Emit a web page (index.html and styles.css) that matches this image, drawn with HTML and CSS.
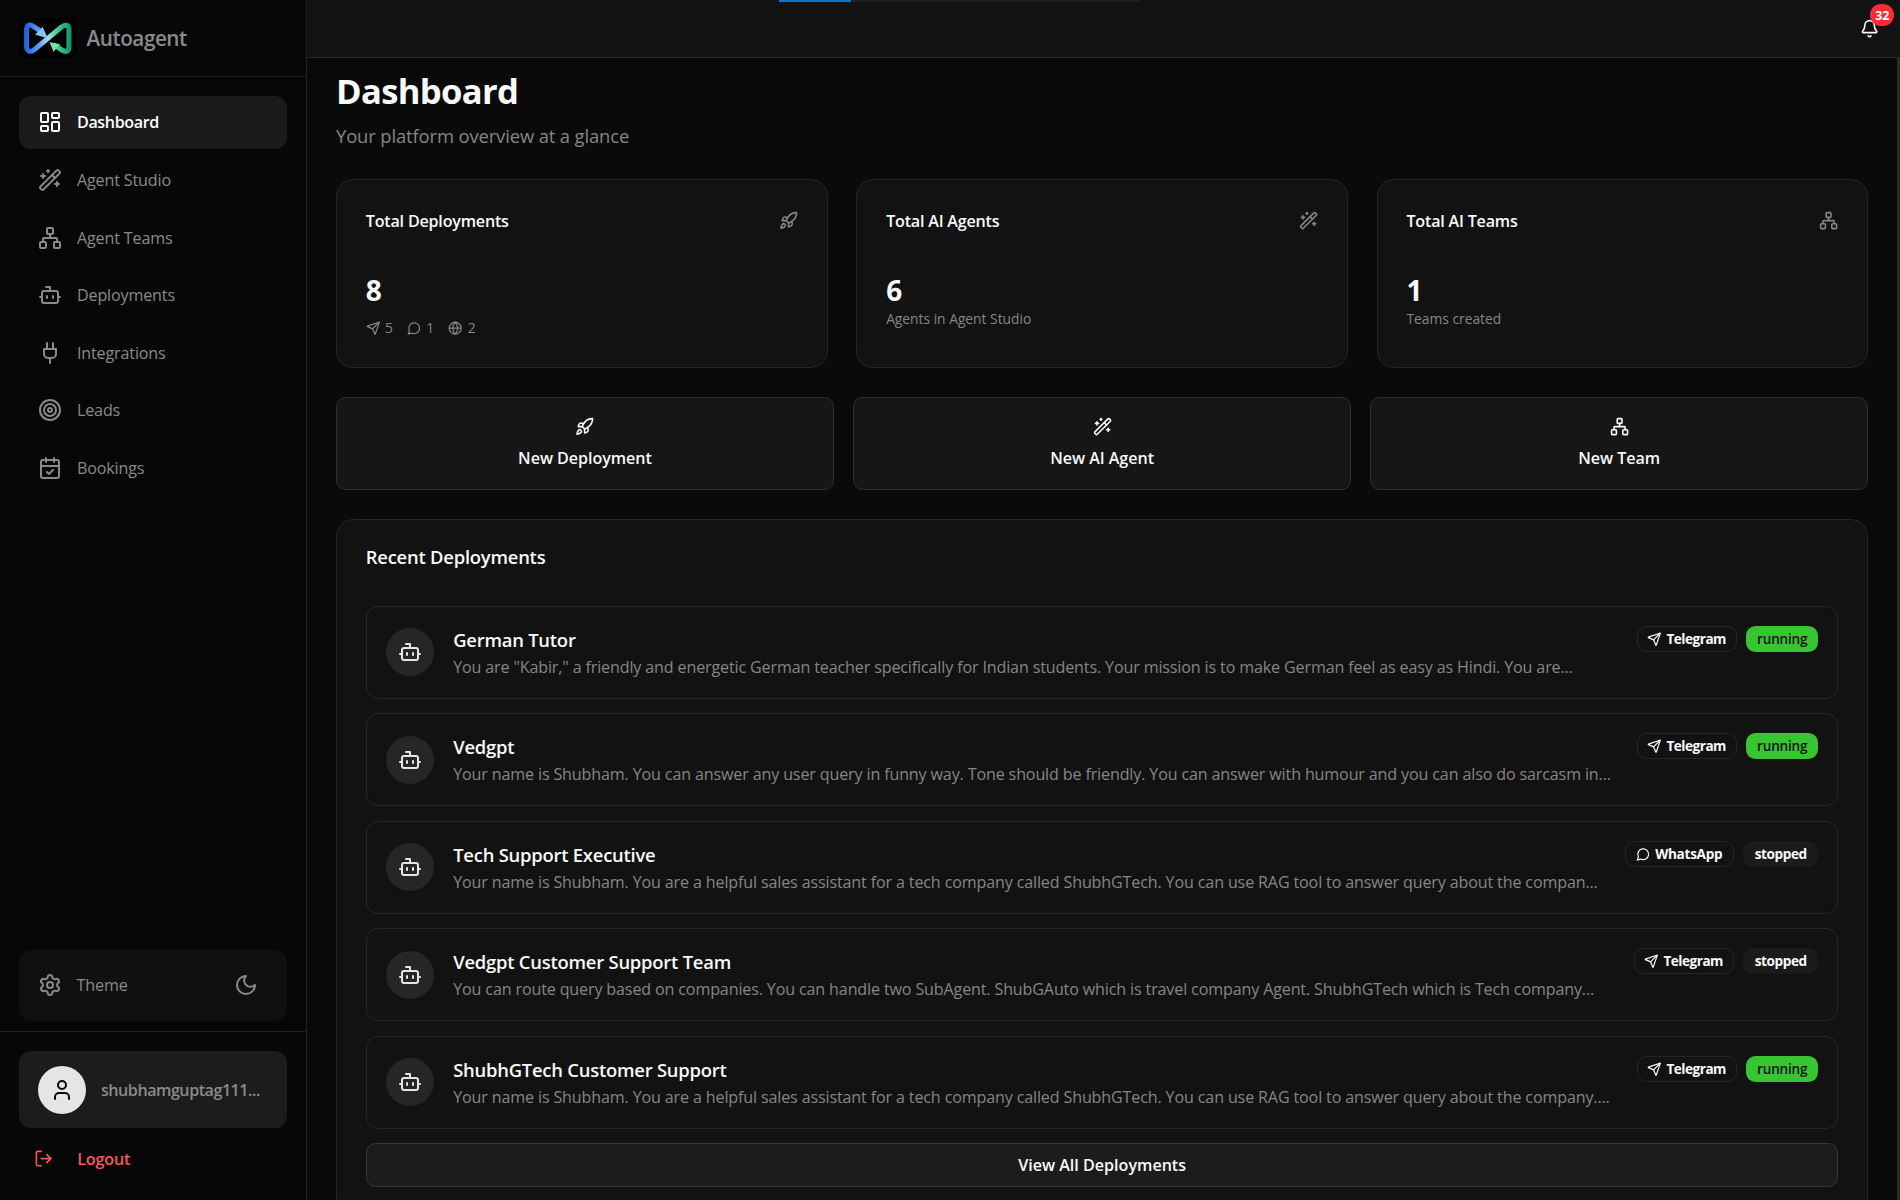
FILE: index.html
```html
<!DOCTYPE html>
<html lang="en">
<head>
    <meta charset="UTF-8">
    <meta name="viewport" content="width=device-width, initial-scale=1.0">
    <title>Autoagent - Dashboard</title>
    <link rel="stylesheet" href="styles.css">
</head>
<body>
    <!-- Icon sprite -->
    <svg class="sprite" width="0" height="0">
        <symbol id="i-dashboard" viewBox="0 0 24 24"><rect width="7" height="9" x="3" y="3" rx="1"/><rect width="7" height="5" x="14" y="3" rx="1"/><rect width="7" height="9" x="14" y="12" rx="1"/><rect width="7" height="5" x="3" y="16" rx="1"/></symbol>
        <symbol id="i-wand" viewBox="0 0 24 24"><path d="m21.64 3.64-1.28-1.28a1.21 1.21 0 0 0-1.72 0L2.36 18.64a1.21 1.21 0 0 0 0 1.72l1.28 1.28a1.2 1.2 0 0 0 1.72 0L21.64 5.36a1.2 1.2 0 0 0 0-1.72"/><path d="m14 7 3 3"/><path d="M5 6v4"/><path d="M19 14v4"/><path d="M10 2v2"/><path d="M7 8H3"/><path d="M21 16h-4"/><path d="M11 3H9"/></symbol>
        <symbol id="i-network" viewBox="0 0 24 24"><rect x="16" y="16" width="6" height="6" rx="1"/><rect x="2" y="16" width="6" height="6" rx="1"/><rect x="9" y="2" width="6" height="6" rx="1"/><path d="M5 16v-3a1 1 0 0 1 1-1h12a1 1 0 0 1 1 1v3"/><path d="M12 12V8"/></symbol>
        <symbol id="i-bot" viewBox="0 0 24 24"><path d="M12 8V4H8"/><rect width="16" height="12" x="4" y="8" rx="2"/><path d="M2 14h2"/><path d="M20 14h2"/><path d="M15 13v2"/><path d="M9 13v2"/></symbol>
        <symbol id="i-plug" viewBox="0 0 24 24"><path d="M12 22v-5"/><path d="M9 8V2"/><path d="M15 8V2"/><path d="M18 8v5a4 4 0 0 1-4 4h-4a4 4 0 0 1-4-4V8Z"/></symbol>
        <symbol id="i-target" viewBox="0 0 24 24"><circle cx="12" cy="12" r="10"/><circle cx="12" cy="12" r="6"/><circle cx="12" cy="12" r="2"/></symbol>
        <symbol id="i-calendar" viewBox="0 0 24 24"><path d="M8 2v4"/><path d="M16 2v4"/><rect width="18" height="18" x="3" y="4" rx="2"/><path d="M3 10h18"/><path d="m9 16 2 2 4-4"/></symbol>
        <symbol id="i-settings" viewBox="0 0 24 24"><path d="M9.671 4.136a2.34 2.34 0 0 1 4.659 0 2.34 2.34 0 0 0 3.319 1.915 2.34 2.34 0 0 1 2.33 4.033 2.34 2.34 0 0 0 0 3.831 2.34 2.34 0 0 1-2.33 4.033 2.34 2.34 0 0 0-3.319 1.915 2.34 2.34 0 0 1-4.659 0 2.34 2.34 0 0 0-3.32-1.915 2.34 2.34 0 0 1-2.33-4.033 2.34 2.34 0 0 0 0-3.831A2.34 2.34 0 0 1 6.35 6.051a2.34 2.34 0 0 0 3.319-1.915"/><circle cx="12" cy="12" r="3"/></symbol>
        <symbol id="i-moon" viewBox="0 0 24 24"><path d="M12 3a6 6 0 0 0 9 9 9 9 0 1 1-9-9Z"/></symbol>
        <symbol id="i-user" viewBox="0 0 24 24"><path d="M19 21v-2a4 4 0 0 0-4-4H9a4 4 0 0 0-4 4v2"/><circle cx="12" cy="7" r="4"/></symbol>
        <symbol id="i-logout" viewBox="0 0 24 24"><path d="m16 17 5-5-5-5"/><path d="M21 12H9"/><path d="M9 21H5a2 2 0 0 1-2-2V5a2 2 0 0 1 2-2h4"/></symbol>
        <symbol id="i-bell" viewBox="0 0 24 24"><path d="M10.268 21a2 2 0 0 0 3.464 0"/><path d="M3.262 15.326A1 1 0 0 0 4 17h16a1 1 0 0 0 .74-1.673C19.41 13.956 18 12.499 18 8A6 6 0 0 0 6 8c0 4.499-1.411 5.956-2.738 7.326"/></symbol>
        <symbol id="i-rocket" viewBox="0 0 24 24"><path d="M4.5 16.5c-1.5 1.26-2 5-2 5s3.74-.5 5-2c.71-.84.7-2.13-.09-2.91a2.18 2.18 0 0 0-2.91-.09z"/><path d="m12 15-3-3a22 22 0 0 1 2-3.95A12.88 12.88 0 0 1 22 2c0 2.72-.78 7.5-6 11a22.35 22.35 0 0 1-4 2z"/><path d="M9 12H4s.55-3.03 2-4c1.62-1.08 5 0 5 0"/><path d="M12 15v5s3.03-.55 4-2c1.08-1.62 0-5 0-5"/></symbol>
        <symbol id="i-send" viewBox="0 0 24 24"><path d="M14.536 21.686a.5.5 0 0 0 .937-.024l6.5-19a.496.496 0 0 0-.635-.635l-19 6.5a.5.5 0 0 0-.024.937l7.93 3.18a2 2 0 0 1 1.112 1.11z"/><path d="m21.854 2.147-10.94 10.939"/></symbol>
        <symbol id="i-chat" viewBox="0 0 24 24"><path d="M7.9 20A9 9 0 1 0 4 16.1L2 22Z"/></symbol>
        <symbol id="i-globe" viewBox="0 0 24 24"><circle cx="12" cy="12" r="10"/><path d="M12 2a14.5 14.5 0 0 0 0 20 14.5 14.5 0 0 0 0-20"/><path d="M2 12h20"/></symbol>
    </svg>

    <div class="app">
        <aside class="sidebar">
            <div class="brand">
                <svg class="logo" viewBox="0 0 58 40">
                    <defs>
                        <linearGradient id="logoGradient" gradientUnits="userSpaceOnUse" x1="6" y1="0" x2="52" y2="0">
                            <stop offset="0" stop-color="#1d5fdc"/>
                            <stop offset="0.3" stop-color="#5b9df0"/>
                            <stop offset="0.5" stop-color="#a5dcec"/>
                            <stop offset="0.7" stop-color="#45cc90"/>
                            <stop offset="1" stop-color="#109563"/>
                        </linearGradient>
                    </defs>
                    <rect width="58" height="40" rx="11" fill="#000"/>
                    <path class="logo-line" d="M22 13.500 15 8.800Q8.500 4.500 7.500 11V29Q8.500 36 15 31.800L42.500 9Q49.500 4.500 50 11V29Q49.500 36 43 32L36 27.500"/>
                    <path fill="#8cc2f5" d="M29 20.500 23.500 8.800 21 12 16 16.500Z"/>
                    <path fill="#6fe3a8" d="M30.500 24 41.500 26.500 38 29.500 34.500 34Z"/>
                </svg>
                <span class="brand-name">Autoagent</span>
            </div>

            <nav class="nav">
                <a class="nav-item active"><svg class="icon"><use href="#i-dashboard"/></svg>Dashboard</a>
                <a class="nav-item"><svg class="icon"><use href="#i-wand"/></svg>Agent Studio</a>
                <a class="nav-item"><svg class="icon"><use href="#i-network"/></svg>Agent Teams</a>
                <a class="nav-item"><svg class="icon"><use href="#i-bot"/></svg>Deployments</a>
                <a class="nav-item"><svg class="icon"><use href="#i-plug"/></svg>Integrations</a>
                <a class="nav-item"><svg class="icon"><use href="#i-target"/></svg>Leads</a>
                <a class="nav-item"><svg class="icon"><use href="#i-calendar"/></svg>Bookings</a>
            </nav>

            <div class="theme">
                <svg class="icon"><use href="#i-settings"/></svg>
                <span class="theme-label">Theme</span>
                <svg class="icon"><use href="#i-moon"/></svg>
            </div>

            <div class="account">
                <div class="user">
                    <span class="user-avatar"><svg class="icon"><use href="#i-user"/></svg></span>
                    <span class="user-name">shubhamguptag111...</span>
                </div>
                <a class="logout"><svg class="icon icon-md"><use href="#i-logout"/></svg>Logout</a>
            </div>
        </aside>

        <div class="page">
            <header class="topbar">
                <div class="progress"><div class="progress-bar"></div></div>
                <div class="bell">
                    <svg class="icon icon-md"><use href="#i-bell"/></svg>
                    <span class="bell-count">32</span>
                </div>
            </header>

            <div class="scroll-area">
                <main class="content">
                    <h1>Dashboard</h1>
                    <p class="subtitle">Your platform overview at a glance</p>

                    <section class="stats">
                        <div class="card">
                            <div class="card-head"><h3>Total Deployments</h3><svg class="icon icon-md"><use href="#i-rocket"/></svg></div>
                            <div class="number">8</div>
                            <div class="channels">
                                <span><svg class="icon icon-sm"><use href="#i-send"/></svg>5</span>
                                <span><svg class="icon icon-sm"><use href="#i-chat"/></svg>1</span>
                                <span><svg class="icon icon-sm"><use href="#i-globe"/></svg>2</span>
                            </div>
                        </div>
                        <div class="card">
                            <div class="card-head"><h3>Total AI Agents</h3><svg class="icon icon-md"><use href="#i-wand"/></svg></div>
                            <div class="number">6</div>
                            <div class="caption">Agents in Agent Studio</div>
                        </div>
                        <div class="card">
                            <div class="card-head"><h3>Total AI Teams</h3><svg class="icon icon-md"><use href="#i-network"/></svg></div>
                            <div class="number">1</div>
                            <div class="caption">Teams created</div>
                        </div>
                    </section>

                    <section class="actions">
                        <button class="action"><svg class="icon icon-md"><use href="#i-rocket"/></svg>New Deployment</button>
                        <button class="action"><svg class="icon icon-md"><use href="#i-wand"/></svg>New AI Agent</button>
                        <button class="action"><svg class="icon icon-md"><use href="#i-network"/></svg>New Team</button>
                    </section>

                    <section class="recent">
                        <h2>Recent Deployments</h2>
                        <div class="list">
                            <div class="row">
                                <span class="bot"><svg class="icon"><use href="#i-bot"/></svg></span>
                                <div class="info">
                                    <h4>German Tutor</h4>
                                    <p>You are "Kabir," a friendly and energetic German teacher specifically for Indian students. Your mission is to make German feel as easy as Hindi. You are...</p>
                                </div>
                                <div class="badges">
                                    <span class="badge telegram"><svg class="icon icon-sm"><use href="#i-send"/></svg>Telegram</span>
                                    <span class="badge running">running</span>
                                </div>
                            </div>
                            <div class="row">
                                <span class="bot"><svg class="icon"><use href="#i-bot"/></svg></span>
                                <div class="info">
                                    <h4>Vedgpt</h4>
                                    <p>Your name is Shubham. You can answer any user query in funny way. Tone should be friendly. You can answer with humour and you can also do sarcasm in...</p>
                                </div>
                                <div class="badges">
                                    <span class="badge telegram"><svg class="icon icon-sm"><use href="#i-send"/></svg>Telegram</span>
                                    <span class="badge running">running</span>
                                </div>
                            </div>
                            <div class="row">
                                <span class="bot"><svg class="icon"><use href="#i-bot"/></svg></span>
                                <div class="info">
                                    <h4>Tech Support Executive</h4>
                                    <p>Your name is Shubham. You are a helpful sales assistant for a tech company called ShubhGTech. You can use RAG tool to answer query about the compan...</p>
                                </div>
                                <div class="badges">
                                    <span class="badge whatsapp"><svg class="icon icon-sm"><use href="#i-chat"/></svg>WhatsApp</span>
                                    <span class="badge stopped">stopped</span>
                                </div>
                            </div>
                            <div class="row">
                                <span class="bot"><svg class="icon"><use href="#i-bot"/></svg></span>
                                <div class="info">
                                    <h4>Vedgpt Customer Support Team</h4>
                                    <p>You can route query based on companies. You can handle two SubAgent. ShubGAuto which is travel company Agent. ShubhGTech which is Tech company...</p>
                                </div>
                                <div class="badges">
                                    <span class="badge telegram"><svg class="icon icon-sm"><use href="#i-send"/></svg>Telegram</span>
                                    <span class="badge stopped">stopped</span>
                                </div>
                            </div>
                            <div class="row">
                                <span class="bot"><svg class="icon"><use href="#i-bot"/></svg></span>
                                <div class="info">
                                    <h4>ShubhGTech Customer Support</h4>
                                    <p>Your name is Shubham. You are a helpful sales assistant for a tech company called ShubhGTech. You can use RAG tool to answer query about the company....</p>
                                </div>
                                <div class="badges">
                                    <span class="badge telegram"><svg class="icon icon-sm"><use href="#i-send"/></svg>Telegram</span>
                                    <span class="badge running">running</span>
                                </div>
                            </div>
                            <button class="view-all">View All Deployments</button>
                        </div>
                    </section>
                </main>
                <div class="scrollbar"></div>
            </div>
        </div>
    </div>
</body>
</html>
```
FILE: styles.css
```css
* {
    box-sizing: border-box;
}
body {
    margin: 0;
    background-color: #0a0a0a;
    color: #fafafa;
    font-family: "Open Sans", "Noto Sans", sans-serif;
    font-size: 16.1px;
    line-height: 24px;
    letter-spacing: -0.15px;
    overflow: hidden;
}
h1, h2, h3, h4, p {
    margin: 0;
}
button {
    font: inherit;
    font-weight: 600;
    letter-spacing: inherit;
    color: #fafafa;
    padding: 0;
}
.sprite {
    display: none;
}
.icon {
    width: 24px;
    height: 24px;
    flex-shrink: 0;
    fill: none;
    stroke: currentColor;
    stroke-width: 2;
    stroke-linecap: round;
    stroke-linejoin: round;
}
.icon-md {
    width: 19.2px;
    height: 19.2px;
}
.icon-sm {
    width: 14.4px;
    height: 14.4px;
}
.app {
    display: flex;
    height: 1200px;
}

/* Sidebar */
.sidebar {
    display: flex;
    flex-direction: column;
    width: 307px;
    flex-shrink: 0;
    background-color: #070707;
    border-right: 1px solid #212121;
    color: #8a8a8a;
}
.brand {
    display: flex;
    align-items: center;
    gap: 9.5px;
    height: 77px;
    padding-left: 19px;
    border-bottom: 1px solid #1f1f1f;
}
.logo {
    width: 58px;
    height: 40px;
}
.logo-line {
    fill: none;
    stroke: url(#logoGradient);
    stroke-width: 5;
    stroke-linecap: round;
    stroke-linejoin: round;
}
.brand-name {
    font-size: 20.7px;
    font-weight: 600;
    letter-spacing: -0.45px;
}
.nav {
    display: flex;
    flex-direction: column;
    gap: 4.8px;
    flex: 1;
    padding: 19px 19.2px;
}
.nav-item {
    display: flex;
    align-items: center;
    gap: 14.6px;
    height: 52.8px;
    padding-left: 19.2px;
    border-radius: 12px;
}
.nav-item.active {
    background-color: #1b1b1b;
    color: #fff;
    font-weight: 600;
    letter-spacing: -0.38px;
}
.theme {
    display: flex;
    align-items: center;
    gap: 14.6px;
    height: 71px;
    margin: 0 19px 10px;
    padding: 0 29px 1px 19px;
    border-radius: 12px;
    background-color: #101010;
}
.theme-label {
    flex: 1;
}
.account {
    height: 169px;
    padding: 19px;
    border-top: 1px solid #1f1f1f;
}
.user {
    display: flex;
    align-items: center;
    gap: 15px;
    height: 77px;
    padding-left: 19px;
    border-radius: 12px;
    background-color: #1c1c1c;
}
.user-avatar {
    display: flex;
    align-items: center;
    justify-content: center;
    width: 48px;
    height: 48px;
    border-radius: 50%;
    background-color: #e5e5e5;
    color: #0a0a0a;
}
.user-name {
    font-weight: 600;
    letter-spacing: -0.47px;
}
.logout {
    display: flex;
    align-items: center;
    gap: 24px;
    margin-top: 19px;
    padding-left: 15px;
    color: #f8595f;
    font-weight: 600;
}

/* Top bar */
.page {
    display: flex;
    flex-direction: column;
    flex: 1;
    min-width: 0;
}
.topbar {
    display: flex;
    justify-content: space-between;
    height: 58px;
    flex-shrink: 0;
    padding: 0 20.5px 0 472px;
    background-color: #121212;
    border-bottom: 1px solid #2a2a2a;
}
.progress {
    width: 362px;
    height: 2px;
    background-color: #1e1e1e;
}
.progress-bar {
    width: 72px;
    height: 2px;
    background-color: #0078d4;
}
.bell {
    position: relative;
    height: 19.2px;
    margin-top: 18.5px;
    line-height: 0;
}
.bell-count {
    position: absolute;
    top: -14.5px;
    left: 10px;
    width: 24px;
    height: 22px;
    border-radius: 11px;
    background-color: #fb2c36;
    color: #fff;
    font-size: 12.5px;
    font-weight: 700;
    line-height: 23px;
    text-align: center;
}

/* Content */
.scroll-area {
    display: flex;
    flex: 1;
    min-height: 0;
    overflow: hidden;
}
.scrollbar {
    width: 3px;
    background-color: #2b2b2b;
}
.content {
    flex: 1;
    min-width: 0;
    padding: 10.5px 28.8px 28.8px 29px;
}
h1 {
    font-size: 34.6px;
    font-weight: 700;
    line-height: 43.2px;
    letter-spacing: -0.65px;
}
.subtitle {
    margin-top: 10.5px;
    color: #868686;
    font-size: 18.4px;
    line-height: 28.8px;
    letter-spacing: -0.12px;
}
.stats {
    display: grid;
    grid-template-columns: repeat(3, 1fr);
    gap: 28.8px;
    margin-top: 28.2px;
}
.card {
    height: 188.6px;
    padding: 28.8px;
    background-color: #121212;
    border: 1px solid #262626;
    border-radius: 16.8px;
}
.card-head {
    display: flex;
    align-items: center;
    justify-content: space-between;
    color: #868686;
}
h3 {
    color: #fafafa;
    font-size: 16.1px;
    font-weight: 600;
    letter-spacing: -0.2px;
}
.number {
    margin-top: 38px;
    font-size: 28px;
    font-weight: 700;
    line-height: 38.4px;
}
.caption {
    margin-top: 0;
    color: #868686;
    font-size: 13.8px;
    line-height: 19.2px;
    letter-spacing: 0;
}
.channels {
    display: flex;
    gap: 14.4px;
    margin-top: 9px;
    color: #868686;
    font-size: 13.8px;
    line-height: 19.2px;
}
.channels span {
    display: flex;
    align-items: center;
    gap: 4.8px;
}
.actions {
    display: grid;
    grid-template-columns: repeat(3, 1fr);
    gap: 19.2px;
    margin-top: 28.8px;
}
.action {
    display: flex;
    flex-direction: column;
    align-items: center;
    gap: 10px;
    padding: 19.2px 19.2px 18.8px;
    background-color: #161616;
    border: 1px solid #303030;
    border-radius: 9.6px;
    letter-spacing: -0.05px;
}

/* Recent deployments */
.recent {
    margin-top: 28.8px;
    padding: 28.8px;
    background-color: #121212;
    border: 1px solid #262626;
    border-radius: 16.8px;
}
h2 {
    font-size: 18.4px;
    font-weight: 600;
    line-height: 18.8px;
    letter-spacing: -0.22px;
}
.list {
    display: flex;
    flex-direction: column;
    gap: 14.4px;
    margin-top: 38.4px;
}
.row {
    display: flex;
    align-items: center;
    gap: 19.2px;
    height: 93.2px;
    padding: 19.2px;
    border: 1px solid #262626;
    border-radius: 12px;
}
.bot {
    display: flex;
    align-items: center;
    justify-content: center;
    width: 48px;
    height: 48px;
    flex-shrink: 0;
    border-radius: 50%;
    background-color: #262626;
    color: #e5e5e5;
}
.info {
    flex: 1;
    min-width: 0;
}
h4 {
    font-size: 18.4px;
    font-weight: 600;
    line-height: 28.8px;
    letter-spacing: -0.22px;
}
.info p {
    color: #868686;
    line-height: 24px;
    letter-spacing: -0.145px;
    white-space: nowrap;
}
.badges {
    display: flex;
    align-self: flex-start;
    gap: 9.6px;
}
.badge {
    display: flex;
    align-items: center;
    justify-content: center;
    gap: 4.8px;
    height: 26px;
    border-radius: 9.6px;
    font-size: 13.6px;
    font-weight: 700;
}
.badge.telegram {
    width: 100px;
    border: 1px solid #262626;
    letter-spacing: -0.5px;
}
.badge.whatsapp {
    width: 109px;
    border: 1px solid #262626;
    letter-spacing: -0.3px;
}
.badge.running {
    width: 72px;
    background-color: #37c532;
    color: #121212;
    font-weight: 600;
    letter-spacing: -0.2px;
}
.badge.stopped {
    width: 75px;
    background-color: #1b1b1b;
    letter-spacing: -0.4px;
}
.view-all {
    height: 43.2px;
    background-color: #1c1c1c;
    border: 1px solid #383838;
    border-radius: 9.6px;
    letter-spacing: 0;
}
```
